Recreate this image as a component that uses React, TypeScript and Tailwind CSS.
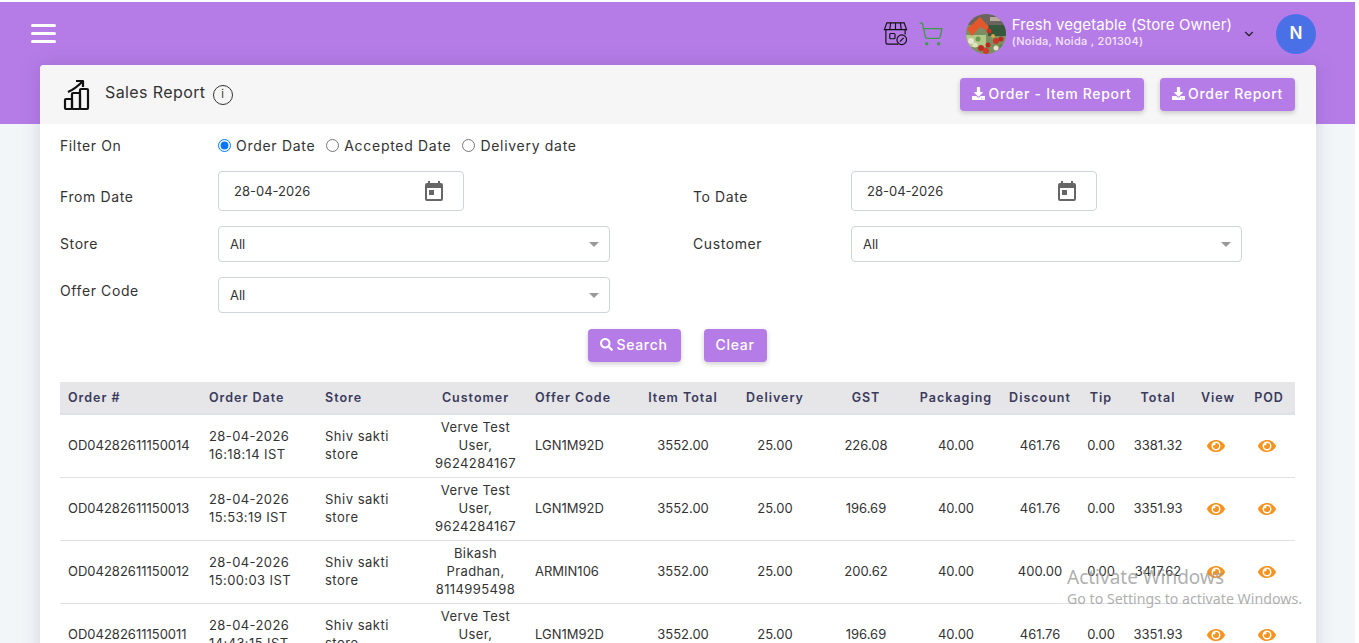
import { ChevronDown, ShoppingCart } from "lucide-react";
import { FaDownload, FaEye, FaSearch } from "react-icons/fa";

const rows = [
  { id: "OD04282611150014", date: "28-04-2026", time: "16:18:14 IST", customer: ["Verve Test", "User,", "9624284167"], code: "LGN1M92D", gst: "226.08", discount: "461.76", total: "3381.32" },
  { id: "OD04282611150013", date: "28-04-2026", time: "15:53:19 IST", customer: ["Verve Test", "User,", "9624284167"], code: "LGN1M92D", gst: "196.69", discount: "461.76", total: "3351.93" },
  { id: "OD04282611150012", date: "28-04-2026", time: "15:00:03 IST", customer: ["Bikash", "Pradhan,", "8114995498"], code: "ARMIN106", gst: "200.62", discount: "400.00", total: "3417.62" },
  { id: "OD04282611150011", date: "28-04-2026", time: "14:43:15 IST", customer: ["Verve Test", "User,", "9624284167"], code: "LGN1M92D", gst: "196.69", discount: "461.76", total: "3351.93" },
];

function StoreIcon() {
  return (
    <svg width="25" height="25" viewBox="0 0 26 26" fill="none" stroke="#111" strokeWidth="1.2">
      <path d="M4 2h18l2.5 7h-23z" />
      <path d="M8 2l-1 7M13 2v7M18 2l1 7" />
      <path d="M3 9v13a2 2 0 0 0 2 2h11" />
      <path d="M23 9v5" />
      <rect x="7" y="13" width="5.5" height="5.5" rx="1" />
      <circle cx="19.5" cy="19.5" r="5" />
      <path d="M17.5 21.5l4-4" />
    </svg>
  );
}

function ChartIcon() {
  return (
    <svg width="28" height="32" viewBox="0 0 28 32" fill="none" stroke="#111" strokeWidth="2.2" strokeLinejoin="round">
      <rect x="2" y="20" width="7" height="10" rx="1" />
      <rect x="9" y="14" width="8" height="16" rx="1" />
      <rect x="17" y="10" width="8" height="20" rx="1" />
      <path d="M5 13Q12 10 19 3" />
      <path d="M13 2h7v6" />
    </svg>
  );
}

function StorePhoto() {
  return (
    <svg width="40" height="40" viewBox="0 0 40 40" className="rounded-full">
      <rect width="40" height="40" fill="#7c8f62" />
      <rect width="40" height="11" fill="#6d635e" />
      <rect x="24" y="3" width="16" height="4" fill="#b9aaa2" />
      <rect x="22" y="11" width="18" height="11" fill="#35583c" />
      <rect x="0" y="21" width="20" height="12" fill="#b3c98a" />
      <circle cx="5" cy="27" r="3" fill="#e8e6cf" />
      <circle cx="12" cy="25" r="2.5" fill="#6c9a4e" />
      <circle cx="9" cy="31" r="2.5" fill="#dfe3c2" />
      <path d="M1 15L14 3l9 10-3 3-6-3-8 9z" fill="#e2582c" />
      <circle cx="23" cy="17" r="2.5" fill="#c8301f" />
      <circle cx="30" cy="27" r="3" fill="#cf3525" />
      <circle cx="35" cy="25" r="2.5" fill="#b92a1d" />
      <circle cx="27" cy="22" r="2" fill="#d9a441" />
      <circle cx="15" cy="34" r="3" fill="#c22c1f" />
      <circle cx="20" cy="37" r="3" fill="#d5392a" />
      <circle cx="22" cy="31" r="2.5" fill="#b92a1d" />
      <circle cx="30" cy="34" r="2.5" fill="#e7e1c8" />
      <circle cx="35" cy="32" r="2" fill="#5e8a47" />
    </svg>
  );
}

function CalendarIcon() {
  return (
    <svg width="20" height="22" viewBox="0 0 20 22" fill="#666">
      <path d="M4 1h2v2h8V1h2v2h1a2 2 0 0 1 2 2v14a2 2 0 0 1-2 2H3a2 2 0 0 1-2-2V5a2 2 0 0 1 2-2h1zM3 8v11h14V8z" />
      <rect x="5" y="10" width="5" height="5" />
    </svg>
  );
}

function DateField() {
  return (
    <div className="flex h-10 w-[246px] items-center justify-between rounded border border-[#ced4da] bg-white pl-[15px] pr-[19px] text-[13px] tracking-normal text-[#333]">
      <span className="pt-0.5">28-04-2026</span>
      <CalendarIcon />
    </div>
  );
}

function SelectField({ width }: { width: string }) {
  return (
    <div className={`flex h-9 items-center justify-between rounded border border-[#ced4da] bg-white pl-[11px] pr-[10px] text-[13px] tracking-normal text-[#333] ${width}`}>
      <span className="pt-0.5">All</span>
      <span className="h-0 w-0 border-x-[5px] border-t-[5px] border-x-transparent border-t-[#999]" />
    </div>
  );
}

function Radio({ label, checked }: { label: string; checked?: boolean }) {
  return (
    <label className="flex items-center gap-[5px]">
      <input type="radio" name="filterOn" defaultChecked={checked} className="m-0 h-[13px] w-[13px]" />
      <span>{label}</span>
    </label>
  );
}

function PurpleButton({ children, className }: { children: React.ReactNode; className: string }) {
  return (
    <button className={`flex h-[33px] items-center justify-center gap-[3px] rounded bg-[#b57ce8] pb-0.5 text-[14px] font-medium tracking-[0.7px] text-white shadow-[0_2px_5px_rgba(0,0,0,0.2)] ${className}`}>
      {children}
    </button>
  );
}

const th = "pt-0.5 text-[12.5px] font-semibold tracking-[1px] text-[#3a3a5c]";

export default function App() {
  return (
    <div className="relative h-screen overflow-hidden bg-white pr-1 pt-[2px] font-['Inter',sans-serif]">
      <div className="h-full bg-[#f3f6f9]">
        {/* Top bar */}
        <div className="h-[122px] bg-[#b57ce8]">
          <div className="flex h-[63px] items-center pl-[31px] pr-[39px]">
            <div className="flex w-[25px] flex-col gap-[5px]">
              <span className="h-[3px] rounded bg-white" />
              <span className="h-[3px] rounded bg-white" />
              <span className="h-[3px] rounded bg-white" />
            </div>
            <div className="ml-auto flex items-center">
              <StoreIcon />
              <ShoppingCart size={26} strokeWidth={1.2} className="ml-[10px] text-[#3f9a46]" />
              <div className="ml-[22px]">
                <StorePhoto />
              </div>
              <div className="mb-1 ml-[6px] text-white">
                <div className="text-[15px] leading-[18px] tracking-[0.1px]">Fresh vegetable (Store Owner)</div>
                <div className="text-[11px] font-medium leading-[14px] tracking-[0.3px] text-[#f3e6ff]">(Noida, Noida , 201304)</div>
              </div>
              <ChevronDown size={14} className="ml-[10px] text-[#222]" />
              <div className="ml-[20px] flex h-10 w-10 items-center justify-center rounded-full bg-[#4a70e8] text-[17px] font-semibold text-white">
                N
              </div>
            </div>
          </div>
        </div>

        {/* Report card */}
        <div className="mx-10 -mt-[59px] w-[1276px] overflow-hidden rounded-t bg-white shadow-[0_0_20px_rgba(60,60,90,0.18)]">
          <div className="flex h-[59px] items-center bg-[#f6f6f6] pl-[23px] pr-[21px] text-[#333]">
            <ChartIcon />
            <span className="mb-1.5 ml-[14px] text-[16px] tracking-[0.4px]">Sales Report</span>
            <span className="ml-[7px] flex h-[20px] w-[20px] items-center justify-center rounded-full border border-[#333] text-[11px]">i</span>
            <div className="ml-auto flex gap-4">
              <PurpleButton className="w-[184px]">
                <FaDownload size={13} />
                Order - Item Report
              </PurpleButton>
              <PurpleButton className="w-[135px]">
                <FaDownload size={13} />
                Order Report
              </PurpleButton>
            </div>
          </div>

          <div className="px-5 text-[14px] tracking-[0.6px] text-[#333]">
            <div className="flex h-[47px] items-center pb-1">
              <span className="w-[158px]">Filter On</span>
              <div className="flex gap-[11px] tracking-[0.7px]">
                <Radio label="Order Date" checked />
                <Radio label="Accepted Date" />
                <Radio label="Delivery date" />
              </div>
            </div>
            <div className="grid grid-cols-[158px_475px_158px_1fr] items-center">
              <span className="pt-[10px]">From Date</span>
              <DateField />
              <span className="pt-[10px]">To Date</span>
              <DateField />
            </div>
            <div className="mt-[15px] grid grid-cols-[158px_475px_158px_1fr] items-center">
              <span className="pb-0.5">Store</span>
              <SelectField width="w-[392px]" />
              <span className="pb-0.5">Customer</span>
              <SelectField width="w-[391px]" />
            </div>
            <div className="mt-[15px] grid grid-cols-[158px_475px] items-center">
              <span className="pb-2.5">Offer Code</span>
              <SelectField width="w-[392px]" />
            </div>
            <div className="mt-4 flex justify-center gap-[23px] pr-[2px]">
              <PurpleButton className="w-[93px]">
                <FaSearch size={13} />
                Search
              </PurpleButton>
              <PurpleButton className="w-[63px]">Clear</PurpleButton>
            </div>

            {/* Orders table */}
            <table className="mt-5 w-[1235px] table-fixed border-collapse text-[13px] tracking-normal">
              <colgroup>
                <col className="w-[141px]" />
                <col className="w-[116px]" />
                <col className="w-[107px]" />
                <col className="w-[103px]" />
                <col className="w-[110px]" />
                <col className="w-[92px]" />
                <col className="w-[92px]" />
                <col className="w-[90px]" />
                <col className="w-[90px]" />
                <col className="w-[78px]" />
                <col className="w-[44px]" />
                <col className="w-[70px]" />
                <col className="w-[50px]" />
                <col className="w-[52px]" />
              </colgroup>
              <thead>
                <tr className="h-[32px] border-b-2 border-[#dee2e6] bg-[#e6e6e8]">
                  <th className={`${th} pl-2 text-left`}>Order #</th>
                  <th className={`${th} pl-2 text-left`}>Order Date</th>
                  <th className={`${th} pl-2 text-left`}>Store</th>
                  <th className={th}>Customer</th>
                  <th className={`${th} pl-2 text-left`}>Offer Code</th>
                  <th className={th}>Item Total</th>
                  <th className={th}>Delivery</th>
                  <th className={th}>GST</th>
                  <th className={th}>Packaging</th>
                  <th className={th}>Discount</th>
                  <th className={th}>Tip</th>
                  <th className={th}>Total</th>
                  <th className={th}>View</th>
                  <th className={th}>POD</th>
                </tr>
              </thead>
              <tbody>
                {rows.map((row) => (
                  <tr key={row.id} className="h-[63px] border-b border-[#dee2e6] text-center leading-[18px] [&>td]:pb-0.5">
                    <td className="pl-2 text-left">{row.id}</td>
                    <td className="pl-2 text-left tracking-[0.4px]">
                      {row.date}
                      <br />
                      {row.time}
                    </td>
                    <td className="pl-2 text-left tracking-[0.5px]">
                      Shiv sakti
                      <br />
                      store
                    </td>
                    <td className="tracking-[0.4px]">
                      {row.customer.map((line) => (
                        <div key={line}>{line}</div>
                      ))}
                    </td>
                    <td className="pl-2 text-left">{row.code}</td>
                    <td>3552.00</td>
                    <td>25.00</td>
                    <td>{row.gst}</td>
                    <td>40.00</td>
                    <td>{row.discount}</td>
                    <td>0.00</td>
                    <td>{row.total}</td>
                    <td>
                      <FaEye size={18} className="ml-[14px] mt-0.5 text-[#f7931e]" />
                    </td>
                    <td>
                      <FaEye size={18} className="ml-[15px] mt-0.5 text-[#f7931e]" />
                    </td>
                  </tr>
                ))}
              </tbody>
            </table>
          </div>
        </div>
      </div>

      {/* Windows activation watermark */}
      <div className="pointer-events-none absolute left-[1067px] top-[565px] font-['Noto_Sans',sans-serif] text-[#9a9a9a]/80">
        <div className="text-[19px] leading-[24px]">Activate Windows</div>
        <div className="text-[14.2px] leading-[20px]">Go to Settings to activate Windows.</div>
      </div>
    </div>
  );
}
